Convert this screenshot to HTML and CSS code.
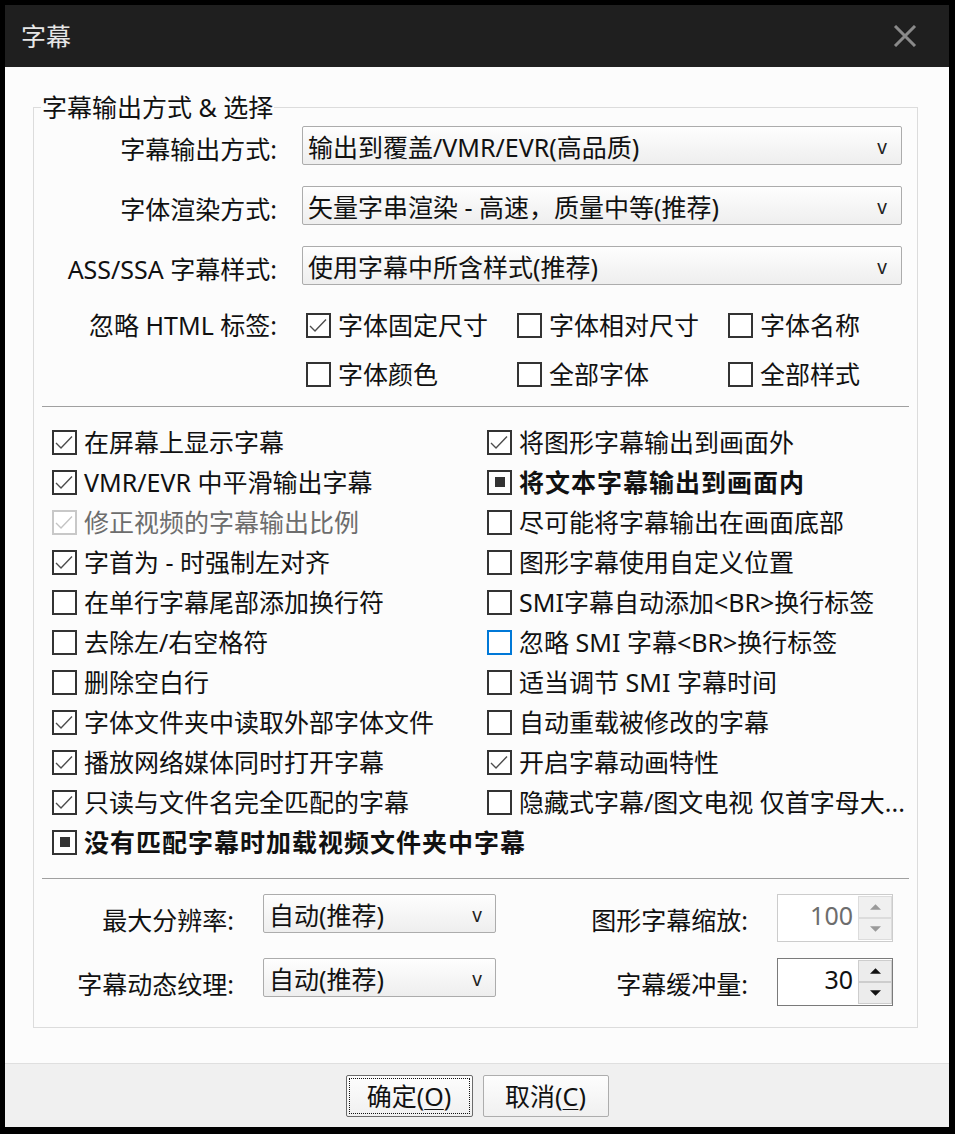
FILE: index.html
```html
<!DOCTYPE html>
<html lang="zh-CN">
<head>
<meta charset="utf-8">
<title>字幕</title>
<link rel="stylesheet" href="styles.css">
</head>
<body>
<div class="window">
  <header class="titlebar">
    <span class="title">字幕</span>
    <svg class="close" width="24" height="22" viewBox="0 0 24 22"><path d="M2 1 L22 21 M22 1 L2 21"/></svg>
  </header>
  <main class="content">
    <fieldset class="group">
      <legend>字幕输出方式 &amp; 选择</legend>
      <div class="select-rows">
        <span class="label">字幕输出方式:</span>
        <div class="dropdown"><span class="dd-text">输出到覆盖/VMR/EVR(高品质)</span><span class="dd-arrow">v</span></div>
        <span class="label">字体渲染方式:</span>
        <div class="dropdown"><span class="dd-text">矢量字串渲染 - 高速，质量中等(推荐)</span><span class="dd-arrow">v</span></div>
        <span class="label">ASS/SSA 字幕样式:</span>
        <div class="dropdown"><span class="dd-text">使用字幕中所含样式(推荐)</span><span class="dd-arrow">v</span></div>
      </div>
      <div class="tag-grid">
        <span class="label">忽略 HTML 标签:</span>
        <div class="cb"><span class="box"><svg viewBox="0 0 21 21"><path d="M2 11 L7 16 L18 4.5"/></svg></span><span>字体固定尺寸</span></div>
        <div class="cb"><span class="box"></span><span>字体相对尺寸</span></div>
        <div class="cb"><span class="box"></span><span>字体名称</span></div>
        <span></span>
        <div class="cb"><span class="box"></span><span>字体颜色</span></div>
        <div class="cb"><span class="box"></span><span>全部字体</span></div>
        <div class="cb"><span class="box"></span><span>全部样式</span></div>
      </div>
      <hr class="sep">
      <div class="options">
        <div class="cb"><span class="box"><svg viewBox="0 0 21 21"><path d="M2 11 L7 16 L18 4.5"/></svg></span><span>在屏幕上显示字幕</span></div>
        <div class="cb"><span class="box"><svg viewBox="0 0 21 21"><path d="M2 11 L7 16 L18 4.5"/></svg></span><span>将图形字幕输出到画面外</span></div>
        <div class="cb"><span class="box"><svg viewBox="0 0 21 21"><path d="M2 11 L7 16 L18 4.5"/></svg></span><span>VMR/EVR 中平滑输出字幕</span></div>
        <div class="cb bold"><span class="box ind"><i></i></span><span>将文本字幕输出到画面内</span></div>
        <div class="cb disabled"><span class="box"><svg viewBox="0 0 21 21"><path d="M2 11 L7 16 L18 4.5"/></svg></span><span>修正视频的字幕输出比例</span></div>
        <div class="cb"><span class="box"></span><span>尽可能将字幕输出在画面底部</span></div>
        <div class="cb"><span class="box"><svg viewBox="0 0 21 21"><path d="M2 11 L7 16 L18 4.5"/></svg></span><span>字首为 - 时强制左对齐</span></div>
        <div class="cb"><span class="box"></span><span>图形字幕使用自定义位置</span></div>
        <div class="cb"><span class="box"></span><span>在单行字幕尾部添加换行符</span></div>
        <div class="cb"><span class="box"></span><span>SMI字幕自动添加&lt;BR&gt;换行标签</span></div>
        <div class="cb"><span class="box"></span><span>去除左/右空格符</span></div>
        <div class="cb focus"><span class="box"></span><span>忽略 SMI 字幕&lt;BR&gt;换行标签</span></div>
        <div class="cb"><span class="box"></span><span>删除空白行</span></div>
        <div class="cb"><span class="box"></span><span>适当调节 SMI 字幕时间</span></div>
        <div class="cb"><span class="box"><svg viewBox="0 0 21 21"><path d="M2 11 L7 16 L18 4.5"/></svg></span><span>字体文件夹中读取外部字体文件</span></div>
        <div class="cb"><span class="box"></span><span>自动重载被修改的字幕</span></div>
        <div class="cb"><span class="box"><svg viewBox="0 0 21 21"><path d="M2 11 L7 16 L18 4.5"/></svg></span><span>播放网络媒体同时打开字幕</span></div>
        <div class="cb"><span class="box"><svg viewBox="0 0 21 21"><path d="M2 11 L7 16 L18 4.5"/></svg></span><span>开启字幕动画特性</span></div>
        <div class="cb"><span class="box"><svg viewBox="0 0 21 21"><path d="M2 11 L7 16 L18 4.5"/></svg></span><span>只读与文件名完全匹配的字幕</span></div>
        <div class="cb"><span class="box"></span><span>隐藏式字幕/图文电视 仅首字母大...</span></div>
        <div class="cb bold wide"><span class="box ind"><i></i></span><span>没有匹配字幕时加载视频文件夹中字幕</span></div>
      </div>
      <hr class="sep sep2">
      <div class="bottom-grid">
        <span class="label">最大分辨率:</span>
        <div class="dropdown small"><span class="dd-text">自动(推荐)</span><span class="dd-arrow">v</span></div>
        <span class="label">图形字幕缩放:</span>
        <div class="spin disabled">
          <span class="spin-value">100</span>
          <span class="spin-btns">
            <span class="spin-btn"><svg viewBox="0 0 10 5"><path d="M0 5 L5 0 L10 5 Z"/></svg></span>
            <span class="spin-btn"><svg viewBox="0 0 10 5"><path d="M0 0 L10 0 L5 5 Z"/></svg></span>
          </span>
        </div>
        <span class="label">字幕动态纹理:</span>
        <div class="dropdown small"><span class="dd-text">自动(推荐)</span><span class="dd-arrow">v</span></div>
        <span class="label">字幕缓冲量:</span>
        <div class="spin">
          <span class="spin-value">30</span>
          <span class="spin-btns">
            <span class="spin-btn"><svg viewBox="0 0 10 5"><path d="M0 5 L5 0 L10 5 Z"/></svg></span>
            <span class="spin-btn"><svg viewBox="0 0 10 5"><path d="M0 0 L10 0 L5 5 Z"/></svg></span>
          </span>
        </div>
      </div>
    </fieldset>
  </main>
  <footer class="footer">
    <button class="btn default">确定(<u>O</u>)</button>
    <button class="btn cancel">取消(<u>C</u>)</button>
  </footer>
</div>
</body>
</html>
```
FILE: styles.css
```css
* { box-sizing: border-box; }
html, body { margin: 0; padding: 0; }
body {
  background: #000;
  width: 955px;
  height: 1134px;
  overflow: hidden;
  font-family: "Noto Sans", "Noto Sans CJK SC", sans-serif;
  font-size: 25px;
  color: #111;
}
.window {
  margin: 5px 6px 0 5px;
  width: 944px;
  height: 1122px;
  background: #fcfcfc;
  display: flex;
  flex-direction: column;
}
.titlebar {
  flex: none;
  height: 62px;
  background: #1f1f1f;
  display: flex;
  align-items: center;
  justify-content: space-between;
  padding: 0 32px 0 16px;
}
.title { color: #e6e6e6; font-size: 25px; line-height: 30px; }
.close { fill: none; stroke: #8a8a8a; stroke-width: 3; }
.content {
  flex: 1;
  padding: 27px 31px 0 28px;
}
.group {
  margin: 0;
  padding: 0 0 21px;
  border: 1px solid #dcdcdc;
  min-width: 0;
}
.group legend {
  margin-left: 7px;
  padding: 0 1px;
  font-size: 25px;
  line-height: 26px;
}
.label {
  text-align: right;
  white-space: nowrap;
  align-self: center;
  line-height: 30px;
}
.select-rows {
  display: grid;
  grid-template-columns: 268px 600px;
  grid-auto-rows: 39px;
  row-gap: 21px;
  margin-top: 6px;
}
.select-rows .label { padding-right: 25px; padding-top: 7px; }
.dropdown {
  display: flex;
  align-items: center;
  justify-content: space-between;
  border: 1px solid #acacac;
  border-radius: 2px;
  background: linear-gradient(#fefefe, #eeeeee);
  padding: 2px 14px 0 5px;
  line-height: 30px;
  white-space: nowrap;
}
.dd-arrow { font-size: 19px; color: #222; }
.tag-grid {
  display: grid;
  grid-template-columns: 272px 211px 211px 1fr;
  grid-auto-rows: 40px;
  row-gap: 9px;
  margin-top: 20px;
}
.tag-grid .label { padding-right: 29px; }
.cb {
  display: flex;
  align-items: center;
  gap: 7px;
  white-space: nowrap;
  line-height: 30px;
}
.box {
  flex: none;
  width: 25px;
  height: 25px;
  border: 2px solid #333;
  background: #fff;
  display: flex;
  align-items: center;
  justify-content: center;
}
.box svg { width: 21px; height: 21px; fill: none; stroke: #4d4d4d; stroke-width: 1.4; }
.box.ind i { display: block; width: 10px; height: 10px; background: #333; }
.cb.bold { font-weight: 700; letter-spacing: 1px; }
.cb.disabled { color: #6d6d6d; }
.cb.disabled .box { border-color: #c8c8c8; }
.cb.disabled .box svg { stroke: #c4c4c4; }
.cb.focus .box { border-color: #0078d7; }
.sep {
  margin: 12px 8px 0;
  border: 0;
  border-top: 1px solid #a0a0a0;
  height: 0;
}
.sep2 { margin-top: 16px; }
.options {
  display: grid;
  grid-template-columns: 435px 1fr;
  grid-auto-rows: 40px;
  padding-left: 18px;
  margin-top: 15px;
}
.options .wide { grid-column: 1 / -1; }
.bottom-grid {
  display: grid;
  grid-template-columns: 229px 233px 281px 116px;
  grid-template-rows: 48px 48px;
  row-gap: 16px;
  margin-top: 15px;
}
.bottom-grid .label { padding-right: 29px; padding-top: 3px; }
.dropdown.small { height: 39px; align-self: start; padding-right: 13px; }
.spin {
  display: flex;
  border: 1px solid #7a7a7a;
  background: #fff;
}
.spin-value {
  flex: 1;
  display: flex;
  align-items: center;
  justify-content: flex-end;
  padding: 0 5px 7px 0;
  line-height: 30px;
}
.spin-btns {
  width: 34px;
  display: flex;
  flex-direction: column;
  padding: 1px 0;
}
.spin-btn {
  flex: 1;
  border: 1px solid #cdcdcd;
  background: #ececec;
  display: flex;
  align-items: center;
  justify-content: center;
}
.spin-btn svg { width: 11px; height: 6px; fill: #111; }
.spin.disabled { border-color: #cccccc; }
.spin.disabled .spin-value { color: #6d6d6d; }
.spin.disabled .spin-btn { background: #f0f0f0; border-color: #dcdcdc; }
.spin.disabled .spin-btn svg { fill: #9a9a9a; }
.footer {
  flex: none;
  height: 64px;
  border-top: 1px solid #dfdfdf;
  background: #f0f0f0;
  display: flex;
  justify-content: center;
  align-items: center;
  gap: 10px;
}
.btn {
  width: 126px;
  height: 42px;
  padding: 0;
  font-family: inherit;
  font-size: 25px;
  line-height: 30px;
  color: #111;
  border: 1px solid #adadad;
  border-radius: 2px;
  background: linear-gradient(#fdfdfd, #f0f0f0);
}
.btn.default {
  width: 127px;
  border-color: #6a6a6a;
  outline: 1px dotted #111;
  outline-offset: -4px;
}
.btn u { text-decoration-thickness: 1px; text-underline-offset: 3px; }
```
